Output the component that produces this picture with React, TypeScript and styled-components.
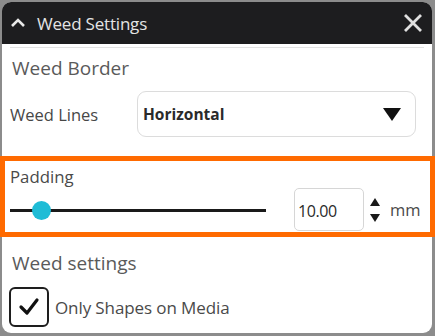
import { createGlobalStyle } from 'styled-components';
import styled from 'styled-components';

const Global = createGlobalStyle`
    html, body { margin: 0; padding: 0; }
    body {
        background: #8c8c8c;
        font-family: "Open Sans", "Noto Sans", sans-serif;
        width: 435px;
        height: 336px;
        overflow: hidden;
    }
`;

const Panel = styled.div`
    margin: 2px 3px 0 2px;
    height: 331px;
    background: #fff;
    border-radius: 9px;
    display: flex;
    flex-direction: column;
`;

const Header = styled.div`
    height: 42px;
    flex: none;
    background: #1d1d1f;
    border-radius: 9px 9px 0 0;
    display: flex;
    align-items: center;
    padding: 0 8px 0 8px;
    color: #e4e4e4;
`;

const Title = styled.span`
    font-size: 17px;
    margin-left: 11px;
    letter-spacing: -0.2px;
`;

const Close = styled.button`
    margin-left: auto;
    border: 0;
    background: none;
    padding: 0;
    width: 22px;
    height: 22px;
    display: flex;
`;

const Divider = styled.div`
    height: 1px;
    background: #e2e2e2;
    margin: 3px 8px 0 8px;
`;

const Heading = styled.div<{ $top: number }>`
    font-size: 19px;
    color: #5a5a5a;
    padding: ${(p) => p.$top}px 0 0 10px;
    line-height: 22px;
`;

const Row = styled.div`
    display: flex;
    align-items: center;
    padding: 12px 16px 0 8px;
`;

const Label = styled.span`
    font-size: 16.5px;
    color: #474747;
    width: 127px;
    flex: none;
`;

const Select = styled.div`
    flex: 1;
    height: 46px;
    box-sizing: border-box;
    border: 1px solid #dcdcdc;
    border-radius: 9px;
    display: flex;
    align-items: center;
    padding: 0 14px 0 5px;
    font-size: 15.5px;
    font-weight: 700;
    color: #2a2a2a;
`;

const Arrow = styled.span`
    margin-left: auto;
    width: 0;
    height: 0;
    border-left: 9px solid transparent;
    border-right: 9px solid transparent;
    border-top: 13px solid #111;
`;

const Highlight = styled.div`
    margin: 19px -3px 0 -2px;
    border: 5px solid #ff6a00;
    height: 71px;
    padding: 0 0 0 5px;
    display: flex;
    flex-direction: column;
`;

const SmallLabel = styled.span`
    font-size: 16.8px;
    color: #4a4a4a;
    padding-top: 6px;
    line-height: 20px;
`;

const SliderRow = styled.div`
    display: flex;
    align-items: center;
    margin-top: 1px;
`;

const Track = styled.div`
    position: relative;
    width: 256px;
    height: 3px;
    background: #1a1a1a;
    margin-top: 1px;
`;

const Thumb = styled.div`
    position: absolute;
    top: -8px;
    width: 19px;
    height: 19px;
    border-radius: 50%;
    background: #1fbcd6;
`;

const NumberBox = styled.div`
    margin-left: 28px;
    width: 70px;
    height: 43px;
    border: 1.5px solid #d6d6d6;
    border-radius: 5px;
    box-sizing: border-box;
    display: flex;
    align-items: center;
    padding: 3px 0 0 3px;
    font-size: 16px;
    color: #2a2a2a;
    letter-spacing: -0.4px;
`;

const Spinner = styled.svg`
    margin-left: 5px;
    flex: none;
`;

const Unit = styled.span`
    margin-left: 9px;
    font-size: 16.5px;
    color: #4a4a4a;
`;

const CheckRow = styled.label`
    display: flex;
    align-items: center;
    padding: 13px 0 0 7px;
    gap: 6px;
`;

const Box = styled.span`
    width: 40px;
    height: 40px;
    box-sizing: border-box;
    border: 2.5px solid #1e1e1e;
    border-radius: 6px;
    display: flex;
    align-items: center;
    justify-content: center;
`;

const CheckText = styled.span`
    font-size: 17px;
    color: #4a4a4a;
    letter-spacing: -0.1px;
`;

export default function App() {
    const value = 10;
    const min = 0;
    const max = 100;
    const pos = ((value - min) / (max - min)) * 256 + 6;

    return (<>
        <Global />
        <Panel>
            <Header>
                <svg width="16" height="12" viewBox="0 0 16 12">
                    <path d="M2 9 L8 3 L14 9" fill="none" stroke="#e8e8e8" strokeWidth="2.6" />
                </svg>
                <Title>Weed Settings</Title>
                <Close aria-label="close">
                    <svg width="22" height="22" viewBox="0 0 22 22">
                        <path d="M3 3 L19 19 M19 3 L3 19" stroke="#e0e0e0" strokeWidth="2.8" />
                    </svg>
                </Close>
            </Header>
            <Divider />
            <Heading $top={9}>Weed Border</Heading>
            <Row>
                <Label>Weed Lines</Label>
                <Select>
                    Horizontal
                    <Arrow />
                </Select>
            </Row>
            <Highlight>
                <SmallLabel>Padding</SmallLabel>
                <SliderRow>
                    <Track>
                        <Thumb style={{ left: pos - 9.5 }} />
                    </Track>
                    <NumberBox>10.00</NumberBox>
                    <Spinner width="12" height="26" viewBox="0 0 12 26">
                        <path d="M6 1 L11 9 L1 9 Z" fill="#1a1a1a" />
                        <path d="M6 25 L11 17 L1 17 Z" fill="#1a1a1a" />
                    </Spinner>
                    <Unit>mm</Unit>
                </SliderRow>
            </Highlight>
            <Heading $top={15}>Weed settings</Heading>
            <CheckRow>
                <Box>
                    <svg width="24" height="20" viewBox="0 0 24 20">
                        <path d="M4 10 L10 16 L20 3" fill="none" stroke="#111" strokeWidth="3.2" strokeLinecap="round" strokeLinejoin="round" />
                    </svg>
                </Box>
                <CheckText>Only Shapes on Media</CheckText>
            </CheckRow>
        </Panel>
    </>);
}
